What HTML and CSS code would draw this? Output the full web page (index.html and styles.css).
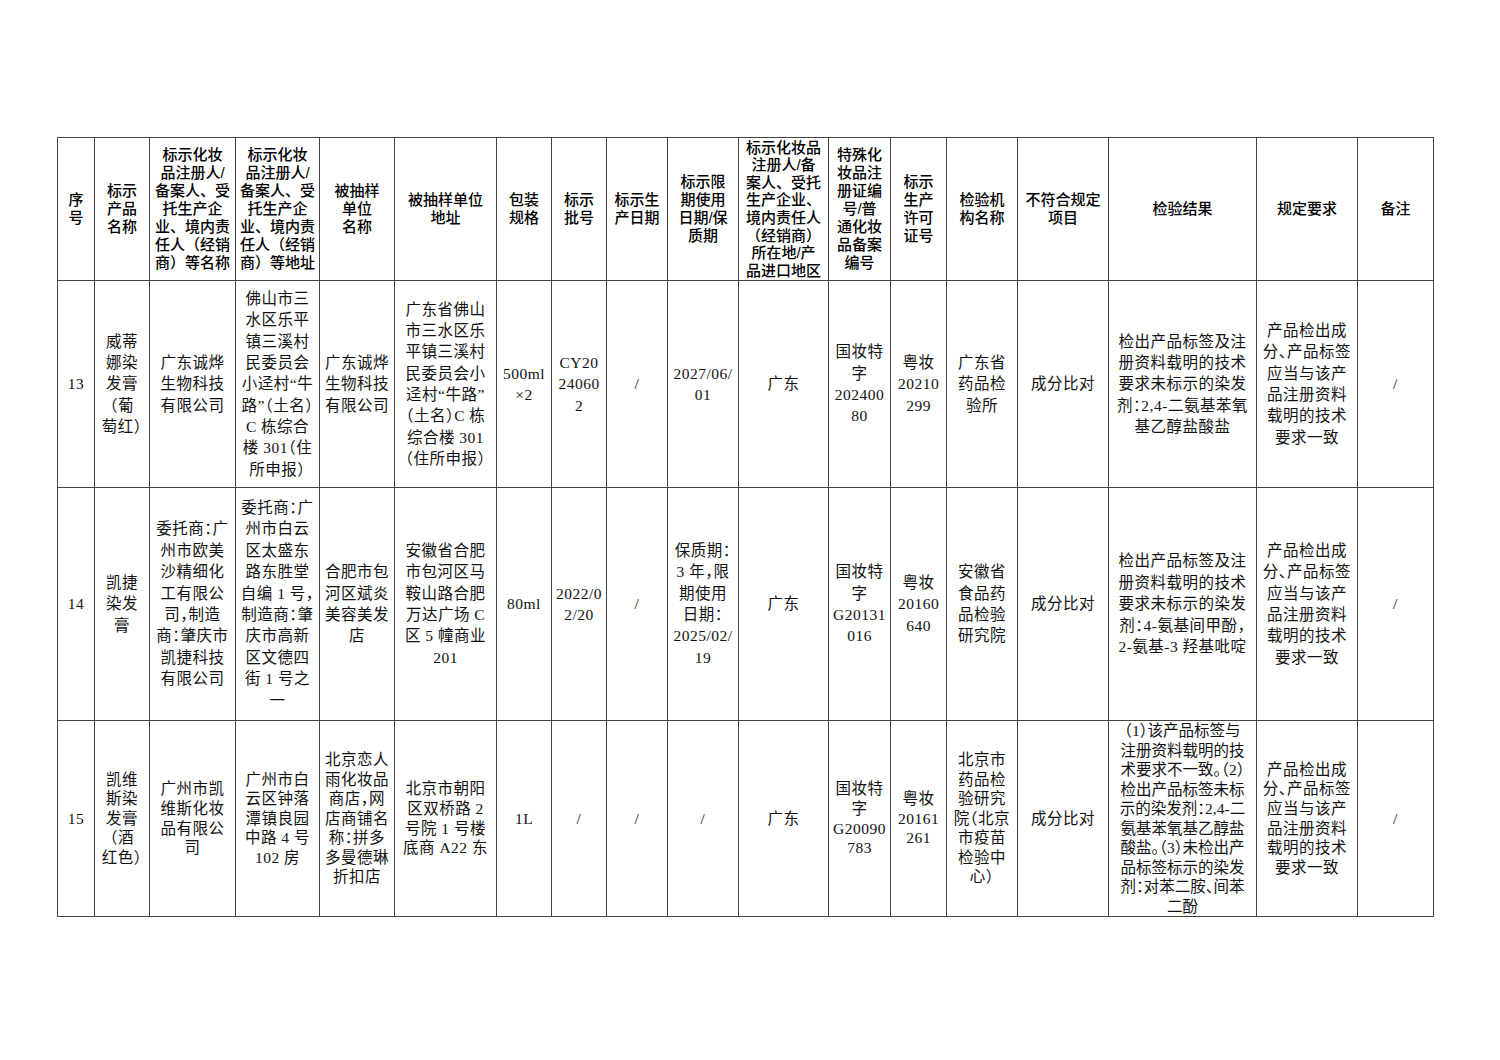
FILE: index.html
```html
<!DOCTYPE html>
<html lang="zh-CN">
<head>
<meta charset="utf-8">
<title>抽检结果</title>
<link rel="stylesheet" href="styles.css">
</head>
<body>
<div class="page">
<table class="grid">
<colgroup>
<col class="c37"><col class="c55"><col class="c86"><col class="c84"><col class="c75"><col class="c102"><col class="c55"><col class="c55"><col class="c61"><col class="c71"><col class="c90"><col class="c62"><col class="c56"><col class="c71"><col class="c91"><col class="c148"><col class="c101"><col class="c76">
</colgroup>
<thead>
<tr class="hdr">
<th>序<br>号</th>
<th>标示<br>产品<br>名称</th>
<th>标示化妆<br>品注册人/<br>备案人、受<br>托生产企<br>业、境内责<br>任人（经销<br>商）等名称</th>
<th>标示化妆<br>品注册人/<br>备案人、受<br>托生产企<br>业、境内责<br>任人（经销<br>商）等地址</th>
<th>被抽样<br>单位<br>名称</th>
<th>被抽样单位<br>地址</th>
<th>包装<br>规格</th>
<th>标示<br>批号</th>
<th>标示生<br>产日期</th>
<th>标示限<br>期使用<br>日期/保<br>质期</th>
<th class="dense">标示化妆品<br>注册人/备<br>案人、受托<br>生产企业、<br>境内责任人<br>（经销商）<br>所在地/产<br>品进口地区</th>
<th>特殊化<br>妆品注<br>册证编<br>号/普<br>通化妆<br>品备案<br>编号</th>
<th>标示<br>生产<br>许可<br>证号</th>
<th>检验机<br>构名称</th>
<th>不符合规定<br>项目</th>
<th>检验结果</th>
<th>规定要求</th>
<th>备注</th>
</tr>
</thead>
<tbody>
<tr class="r13">
<td>13</td>
<td>威蒂<br>娜染<br>发膏<br>（葡<br>萄红）</td>
<td>广东诚烨<br>生物科技<br>有限公司</td>
<td>佛山市三<br>水区乐平<br>镇三溪村<br>民委员会<br>小迳村“牛<br>路”（土名）<br>C 栋综合<br>楼 301（住<br>所申报）</td>
<td>广东诚烨<br>生物科技<br>有限公司</td>
<td>广东省佛山<br>市三水区乐<br>平镇三溪村<br>民委员会小<br>迳村“牛路”<br>（土名）C 栋<br>综合楼 301<br>（住所申报）</td>
<td>500ml<br>×2</td>
<td>CY20<br>24060<br>2</td>
<td>/</td>
<td>2027/06/<br>01</td>
<td>广东</td>
<td>国妆特<br>字<br>202400<br>80</td>
<td>粤妆<br>20210<br>299</td>
<td>广东省<br>药品检<br>验所</td>
<td>成分比对</td>
<td>检出产品标签及注<br>册资料载明的技术<br>要求未标示的染发<br>剂：2,4-二氨基苯氧<br>基乙醇盐酸盐</td>
<td>产品检出成<br>分、产品标签<br>应当与该产<br>品注册资料<br>载明的技术<br>要求一致</td>
<td>/</td>
</tr>
<tr class="r14">
<td>14</td>
<td>凯捷<br>染发<br>膏</td>
<td>委托商：广<br>州市欧美<br>沙精细化<br>工有限公<br>司，制造<br>商：肇庆市<br>凯捷科技<br>有限公司</td>
<td>委托商：广<br>州市白云<br>区太盛东<br>路东胜堂<br>自编 1 号，<br>制造商：肇<br>庆市高新<br>区文德四<br>街 1 号之<br>一</td>
<td>合肥市包<br>河区斌炎<br>美容美发<br>店</td>
<td>安徽省合肥<br>市包河区马<br>鞍山路合肥<br>万达广场 C<br>区 5 幢商业<br>201</td>
<td>80ml</td>
<td>2022/0<br>2/20</td>
<td>/</td>
<td>保质期：<br>3 年，限<br>期使用<br>日期：<br>2025/02/<br>19</td>
<td>广东</td>
<td>国妆特<br>字<br>G20131<br>016</td>
<td>粤妆<br>20160<br>640</td>
<td>安徽省<br>食品药<br>品检验<br>研究院</td>
<td>成分比对</td>
<td>检出产品标签及注<br>册资料载明的技术<br>要求未标示的染发<br>剂：4-氨基间甲酚，<br>2-氨基-3 羟基吡啶</td>
<td>产品检出成<br>分、产品标签<br>应当与该产<br>品注册资料<br>载明的技术<br>要求一致</td>
<td>/</td>
</tr>
<tr class="r15">
<td>15</td>
<td>凯维<br>斯染<br>发膏<br>（酒<br>红色）</td>
<td>广州市凯<br>维斯化妆<br>品有限公<br>司</td>
<td>广州市白<br>云区钟落<br>潭镇良园<br>中路 4 号<br>102 房</td>
<td>北京恋人<br>雨化妆品<br>商店，网<br>店商铺名<br>称：拼多<br>多曼德琳<br>折扣店</td>
<td>北京市朝阳<br>区双桥路 2<br>号院 1 号楼<br>底商 A22 东</td>
<td>1L</td>
<td>/</td>
<td>/</td>
<td>/</td>
<td>广东</td>
<td>国妆特<br>字<br>G20090<br>783</td>
<td>粤妆<br>20161<br>261</td>
<td>北京市<br>药品检<br>验研究<br>院（北京<br>市疫苗<br>检验中<br>心）</td>
<td>成分比对</td>
<td class="tight">（1）该产品标签与<br>注册资料载明的技<br>术要求不一致。（2）<br>检出产品标签未标<br>示的染发剂：2,4-二<br>氨基苯氧基乙醇盐<br>酸盐。（3）未检出产<br>品标签标示的染发<br>剂：对苯二胺、间苯<br>二酚</td>
<td>产品检出成<br>分、产品标签<br>应当与该产<br>品注册资料<br>载明的技术<br>要求一致</td>
<td>/</td>
</tr>
</tbody>
</table>
</div>
</body>
</html>
```
FILE: styles.css
```css
html, body {
  margin: 0;
  padding: 0;
  background: #ffffff;
}

.page {
  padding: 137px 0 0 57px;
}

.grid {
  border-collapse: collapse;
  table-layout: fixed;
  width: 1377px;
  color: #111;
}

.c37 { width: 37px; }
.c55 { width: 55px; }
.c56 { width: 56px; }
.c61 { width: 61px; }
.c62 { width: 62px; }
.c71 { width: 71px; }
.c75 { width: 75px; }
.c76 { width: 76px; }
.c84 { width: 84px; }
.c86 { width: 86px; }
.c90 { width: 90px; }
.c91 { width: 91px; }
.c101 { width: 101px; }
.c102 { width: 102px; }
.c148 { width: 148px; }

.grid th,
.grid td {
  border: 1px solid #444;
  padding: 0 1px;
  text-align: center;
  vertical-align: middle;
  white-space: nowrap;
  overflow: visible;
}

.grid th {
  font-family: "Liberation Sans", "Noto Sans CJK SC", sans-serif;
  font-size: 15px;
  font-weight: 500;
  line-height: 18px;
  color: #000;
}

.hdr th {
  height: 142px;
}

.grid th.dense {
  line-height: 17.6px;
}

.grid td {
  font-family: "Liberation Serif", "Noto Sans CJK SC", serif;
  font-size: 15.5px;
  font-weight: 400;
  letter-spacing: 0.5px;
  font-feature-settings: "halt";
}

.r13 td {
  height: 206px;
  line-height: 21.3px;
}

.r14 td {
  height: 232px;
  line-height: 21.4px;
}

.r15 td {
  height: 195px;
  line-height: 19.6px;
}

.grid td.tight {
  line-height: 19.5px;
  letter-spacing: 0;
}
```
